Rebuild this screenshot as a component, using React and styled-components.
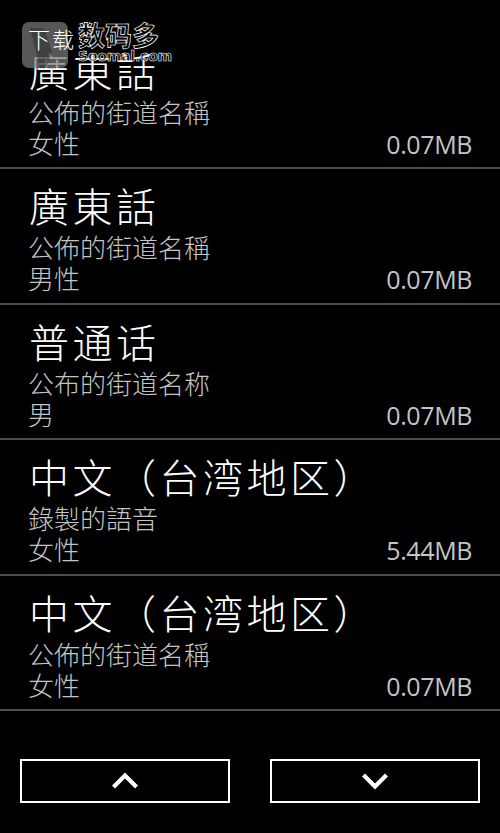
import React from "react"
import styled, { createGlobalStyle } from "styled-components"

const GlobalStyle = createGlobalStyle`
  html, body {
    margin: 0;
    padding: 0;
    background: #000;
  }
  #root {
    height: 833px;
  }
`

const CJK = `"Noto Sans CJK SC", "Noto Sans CJK TC", sans-serif`

const Screen = styled.div`
  position: relative;
  display: flex;
  flex-direction: column;
  width: 500px;
  height: 833px;
  background: #000;
  color: #fff;
  overflow: hidden;
`

const Viewport = styled.div`
  flex: 0 0 730px;
  overflow: hidden;
  padding-top: 33.5px;
  box-sizing: border-box;
`

const Row = styled.div`
  display: flex;
  flex-direction: column;
  height: 135.5px;
  box-sizing: border-box;
  padding: 10px 28px 0 28px;
  border-bottom: 2px solid #4e4e4e;
`

const Title = styled.div`
  font-family: ${CJK};
  font-weight: 300;
  font-size: 40px;
  letter-spacing: 3.5px;
  line-height: 52px;
  white-space: nowrap;
  color: #fff;
  padding-left: 1px;
`

const Sub = styled.div`
  font-family: ${CJK};
  font-weight: 300;
  font-size: 26px;
  line-height: 31px;
  color: #c4c4c4;
  white-space: nowrap;
`

const Meta = styled.div`
  display: flex;
  justify-content: space-between;
  align-items: baseline;
`

const Size = styled.span`
  font-family: "Open Sans", "Noto Sans", sans-serif;
  font-weight: 400;
  font-size: 25px;
  letter-spacing: -0.4px;
  line-height: 31px;
  color: #c4c4c4;
`

const Bar = styled.div`
  flex: 1;
  display: flex;
  gap: 40px;
  padding: 29px 20px 0 20px;
`

const NavButton = styled.button`
  flex: 1;
  height: 44px;
  background: #000;
  border: 2px solid #fff;
  display: flex;
  align-items: center;
  justify-content: center;
  padding: 0;
  cursor: pointer;
`

const Watermark = styled.div`
  position: absolute;
  top: 22px;
  left: 22px;
  display: flex;
  align-items: flex-start;
  pointer-events: none;
`

const Badge = styled.div`
  position: relative;
  width: 46px;
  height: 46px;
  border-radius: 7px;
  background: rgba(120, 120, 120, 0.72);
  display: flex;
  align-items: flex-start;
  padding: 4px 0 0 6px;
  box-sizing: border-box;
`

const BadgeMark = styled.svg`
  position: absolute;
  left: 0;
  top: 0;
`

const BadgeText = styled.span`
  position: relative;
  font-family: ${CJK};
  font-weight: 300;
  font-size: 22px;
  line-height: 24px;
  color: #fff;
  white-space: nowrap;
  letter-spacing: 2px;
`

const Brand = styled.div`
  display: flex;
  flex-direction: column;
  margin-left: 10px;
  margin-top: -2px;
`

const BrandName = styled.span`
  font-family: ${CJK};
  font-weight: 700;
  font-size: 27px;
  line-height: 30px;
  color: rgba(0, 0, 0, 0.6);
  -webkit-text-stroke: 0.7px #fff;
  white-space: nowrap;
`

const BrandUrl = styled.span`
  font-family: "DejaVu Sans", sans-serif;
  font-weight: 700;
  font-size: 14px;
  line-height: 13px;
  color: rgba(0, 0, 0, 0.6);
  -webkit-text-stroke: 0.6px #fff;
  letter-spacing: -0.2px;
`

const items = [
  { title: "廣東話", sub: "公佈的街道名稱", gender: "女性", size: "0.07MB" },
  { title: "廣東話", sub: "公佈的街道名稱", gender: "男性", size: "0.07MB" },
  { title: "普通话", sub: "公布的街道名称", gender: "男", size: "0.07MB" },
  { title: "中文（台湾地区）", sub: "錄製的語音", gender: "女性", size: "5.44MB" },
  { title: "中文（台湾地区）", sub: "公佈的街道名稱", gender: "女性", size: "0.07MB" },
  { title: "粤语（香港）", sub: "公佈的街道名稱", gender: "女性", size: "0.07MB" },
]

const Chevron = ({ up }) => (
  <svg width="28" height="18" viewBox="0 0 28 18">
    <polyline
      points={up ? "2.5,15 14,3.5 25.5,15" : "2.5,3 14,14.5 25.5,3"}
      fill="none"
      stroke="#fff"
      strokeWidth="4.2"
      strokeLinejoin="miter"
    />
  </svg>
)

export default function App() {
  return (
    <Screen>
      <GlobalStyle />
      <Viewport>
        {items.map((it, i) => (
          <Row key={i}>
            <Title>{it.title}</Title>
            <Sub>{it.sub}</Sub>
            <Meta>
              <Sub>{it.gender}</Sub>
              <Size>{it.size}</Size>
            </Meta>
          </Row>
        ))}
      </Viewport>
      <Bar>
        <NavButton aria-label="上">
          <Chevron up />
        </NavButton>
        <NavButton aria-label="下">
          <Chevron />
        </NavButton>
      </Bar>
      <Watermark>
        <Badge>
          <BadgeMark width="46" height="46" viewBox="0 0 46 46">
            <path d="M8 6 L22 6 L30 30 L24 46 L18 46 Z" fill="rgba(40,40,40,0.45)" />
          </BadgeMark>
          <BadgeText>下载</BadgeText>
        </Badge>
        <Brand>
          <BrandName>数码多</BrandName>
          <BrandUrl>Soomal.com</BrandUrl>
        </Brand>
      </Watermark>
    </Screen>
  )
}
